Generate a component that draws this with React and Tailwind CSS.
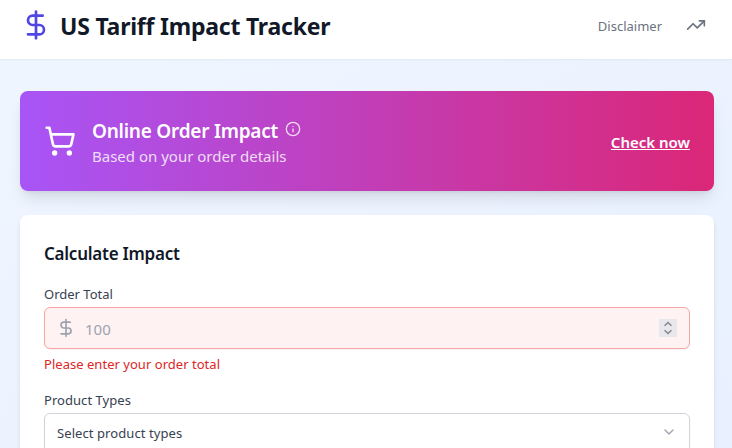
import React from 'react';
import { DollarSign, TrendingUp, ShoppingCart, Info, ChevronDown } from 'lucide-react';

function Header() {
  return (
    <header className="relative flex h-[59px] items-start justify-between bg-white pr-[26px] pl-5 shadow-xs">
      <div className="flex items-start">
        <DollarSign className="mt-[9px] size-8 text-[#4f46e5]" />
        <h1 className="mt-2 ml-2 text-[23px] leading-9 font-bold tracking-[-0.22px] whitespace-nowrap text-[#111827]">
          US Tariff Impact Tracker
        </h1>
      </div>
      <div className="flex items-start text-[#6b7280]">
        <a className="mt-4 text-[13px] leading-5">Disclaimer</a>
        <TrendingUp className="mt-[15px] ml-6 size-5" />
      </div>
    </header>
  );
}

function Banner() {
  return (
    <section className="flex h-[100px] items-center justify-between rounded-lg bg-linear-to-r/srgb from-[#a855f7] to-[#db2777] px-6 text-white shadow-lg">
      <div className="flex items-center">
        <ShoppingCart className="size-8" />
        <div className="ml-4 pt-[3px]">
          <div className="flex h-[27px] items-start">
            <h2 className="text-[19px] leading-7 font-semibold tracking-[-0.24px] whitespace-nowrap">Online Order Impact</h2>
            <Info className="mt-1 ml-[7px] size-4 opacity-80" />
          </div>
          <p className="text-[15px] leading-6 whitespace-nowrap opacity-80">Based on your order details</p>
        </div>
      </div>
      <a className="mt-px text-[15px] leading-6 font-semibold whitespace-nowrap underline">Check now</a>
    </section>
  );
}

function Spinner() {
  return (
    <span className="flex size-[18px] items-center justify-center bg-[#e8e7ec] text-[#8c8b97]">
      <svg width="18" height="18" viewBox="0 0 18 18" fill="none" stroke="currentColor" strokeWidth="1.5">
        <path d="M5.5 6.8 9 3.6l3.5 3.2M5.5 11.2 9 14.4l3.5-3.2" />
      </svg>
    </span>
  );
}

export default function App() {
  return (
    <div className="h-[448px] overflow-hidden bg-linear-to-br from-[#eff6ff] to-[#e9f0ff] font-['Noto_Sans','Open_Sans',sans-serif]">
      <Header />
      <main className="pt-8 pr-[18px] pl-5">
        <Banner />
        <section className="mt-6 h-[400px] rounded-lg bg-white px-6 pt-[25px] shadow-md">
          <h2 className="text-[17px] leading-7 font-semibold tracking-[-0.25px] text-[#111827]">Calculate Impact</h2>
          <label className="mt-4 block text-[13px] leading-5 text-[#374151]">Order Total</label>
          <div className="mt-[3px] flex h-[42px] items-center rounded-md border border-[#fca5a5] bg-[#fef2f2] pr-3 pl-[11px] shadow-xs">
            <DollarSign className="size-5 text-[#9ca3af]" />
            <span className="mt-0.5 ml-[9px] flex-1 text-[15px] leading-6 text-[#9ca3af]">100</span>
            <Spinner />
          </div>
          <p className="mt-[5px] text-[13px] leading-5 tracking-[0.03px] text-[#dc2626]">Please enter your order total</p>
          <label className="mt-4 block text-[13px] leading-5 tracking-[0.05px] text-[#374151]">Product Types</label>
          <div className="mt-[3px] flex h-[40px] items-center justify-between rounded-md border border-[#d1d5db] bg-white px-3 shadow-xs">
            <span className="text-[13px] leading-5 tracking-[0.08px] text-[#374151]">Select product types</span>
            <ChevronDown className="-mt-0.5 size-4 text-[#9ca3af]" />
          </div>
        </section>
      </main>
    </div>
  );
}
